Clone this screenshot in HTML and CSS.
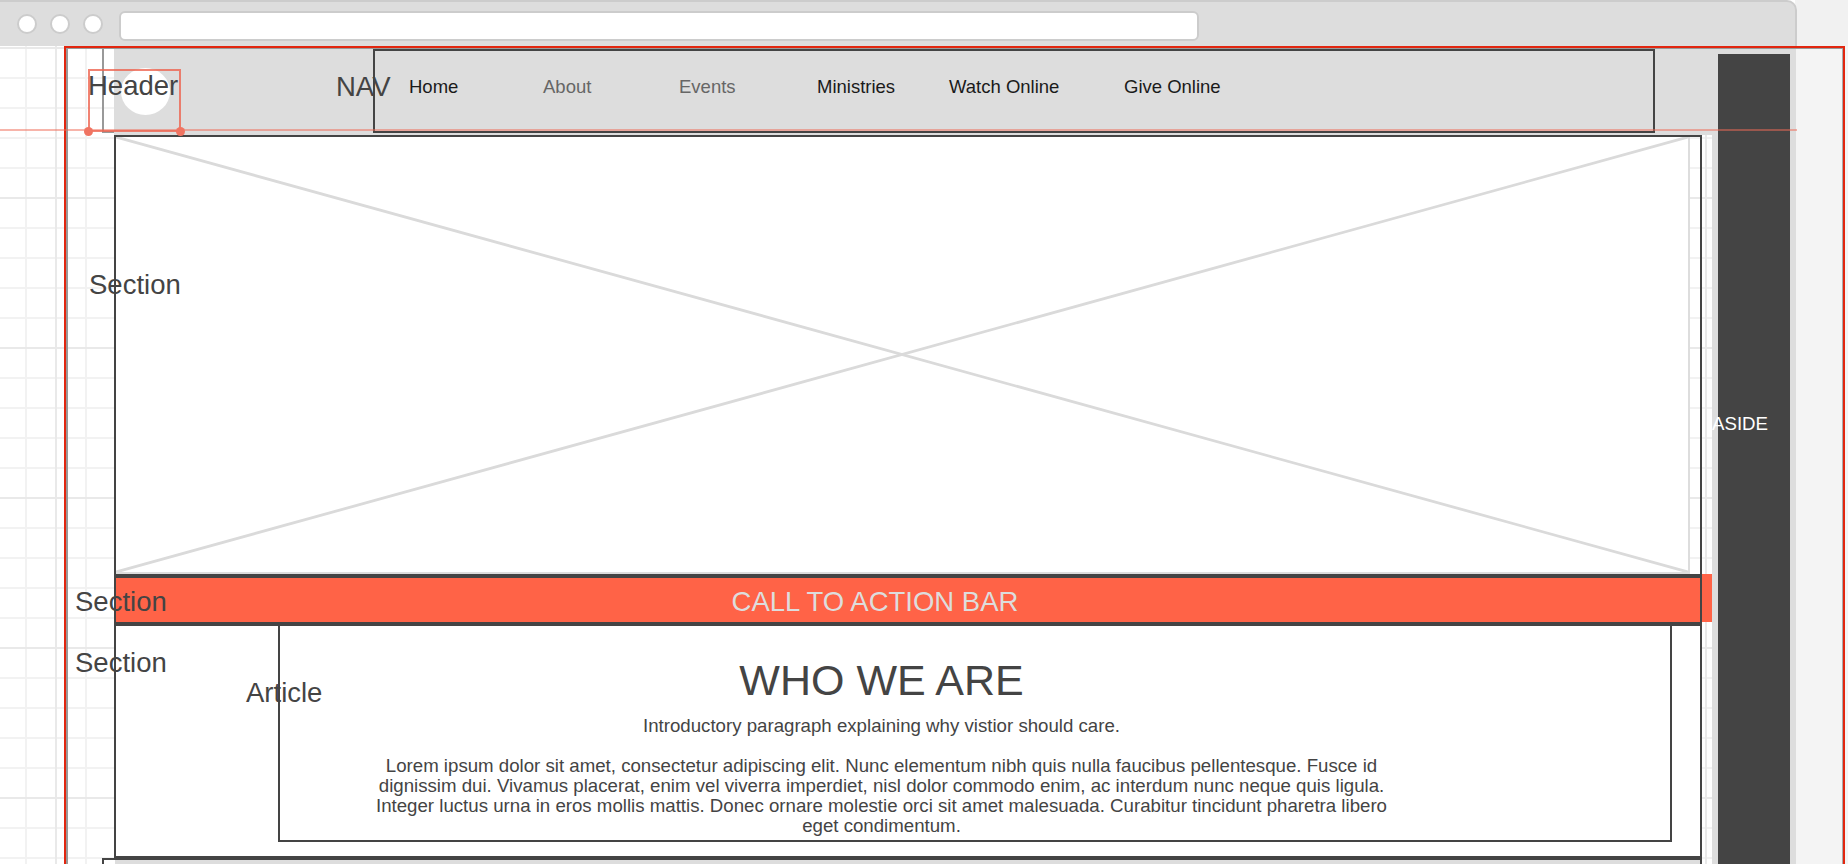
FILE: index.html
```html
<!DOCTYPE html>
<html lang="en">
<head>
<meta charset="utf-8">
<title>Wireframe</title>
<link rel="stylesheet" href="styles.css">
</head>
<body>
<div class="topbar">
  <div class="chrome">
    <span class="dot"></span><span class="dot"></span><span class="dot"></span>
    <div class="url"></div>
  </div>
  <div class="topbar-rest"></div>
</div>
<div class="canvas">
  <div class="gutter"></div>
  <div class="frame">
    <div class="frame-inner">
      <div class="main">
        <header class="site-header">
          <div class="hdr-edge"></div>
          <div class="hdr-main">
            <div class="logo"></div>
            <nav class="nav">
              <a class="nav-link dark">Home</a>
              <a class="nav-link muted">About</a>
              <a class="nav-link muted">Events</a>
              <a class="nav-link dark">Ministries</a>
              <a class="nav-link dark">Watch Online</a>
              <a class="nav-link dark">Give Online</a>
            </nav>
          </div>
        </header>
        <section class="hero">
          <div class="placeholder">
            <svg class="xmark" viewBox="0 0 100 100" preserveAspectRatio="none">
              <line x1="0" y1="0" x2="100" y2="100" vector-effect="non-scaling-stroke"/>
              <line x1="100" y1="0" x2="0" y2="100" vector-effect="non-scaling-stroke"/>
            </svg>
          </div>
        </section>
        <div class="cta-row">
          <section class="cta">CALL TO ACTION BAR</section>
          <div class="cta-tail"></div>
        </div>
        <section class="who">
          <article class="article">
            <div class="article-body">
              <h1 class="who-title">WHO WE ARE</h1>
              <p class="intro">Introductory paragraph explaining why vistior should care.</p>
              <p class="lorem">Lorem ipsum dolor sit amet, consectetur adipiscing elit. Nunc elementum nibh quis nulla faucibus pellentesque. Fusce id dignissim dui. Vivamus placerat, enim vel viverra imperdiet, nisl dolor commodo enim, ac interdum nunc neque quis ligula. Integer luctus urna in eros mollis mattis. Donec ornare molestie orci sit amet malesuada. Curabitur tincidunt pharetra libero eget condimentum.</p>
            </div>
          </article>
        </section>
        <footer class="footer"><div class="footer-fill"></div></footer>
      </div>
      <aside class="aside"><div class="aside-inner"></div></aside>
      <div class="side-fill"></div>
    </div>
  </div>
  <div class="canvas-rest"></div>
</div>

<div class="guide"></div>
<div class="select-box"><span class="handle h-left"></span><span class="handle h-right"></span></div>
<span class="label l-header">Header</span>
<span class="label l-nav">NAV</span>
<span class="label l-sec1">Section</span>
<span class="label l-sec2">Section</span>
<span class="label l-sec3">Section</span>
<span class="label l-article">Article</span>
<span class="aside-label">ASIDE</span>
</body>
</html>
```
FILE: styles.css
```css
* { box-sizing: border-box; }

html, body {
  margin: 0;
  padding: 0;
}

body {
  position: relative;
  width: 1848px;
  height: 864px;
  overflow: hidden;
  font-family: "Liberation Sans", Arial, sans-serif;
  color: #444;
  background-color: #fff;
  background-image:
    linear-gradient(to right, #e9e9e9 2px, transparent 2px),
    linear-gradient(to bottom, #e9e9e9 2px, transparent 2px),
    linear-gradient(to right, #f2f2f2 2px, transparent 2px),
    linear-gradient(to bottom, #f2f2f2 2px, transparent 2px);
  background-size: 150px 150px, 150px 150px, 30px 30px, 30px 30px;
  background-position: 55px 0, 0 47px, 25px 0, 0 17px;
}

/* browser chrome */
.topbar {
  display: flex;
  height: 46px;
}
.chrome {
  width: 1797px;
  height: 46px;
  background: #ddd;
  border-top: 2px solid #ccc;
  border-right: 2px solid #ccc;
  border-top-right-radius: 10px;
  display: flex;
  align-items: center;
  padding-left: 17px;
  gap: 13px;
}
.dot {
  width: 20px;
  height: 20px;
  border-radius: 50%;
  background: #fff;
  border: 2px solid #ccc;
  flex: none;
}
.url {
  margin-left: 3px;
  margin-top: 4px;
  width: 1080px;
  height: 30px;
  background: #fff;
  border: 2px solid #ccc;
  border-radius: 6px;
}
.topbar-rest {
  flex: 1;
  background: #f1f1f1;
}

/* canvas */
.canvas {
  display: flex;
  height: 818px;
}
.gutter { width: 64px; flex: none; }
.frame {
  width: 1781px;
  flex: none;
  border: 2px solid #e2260f;
  border-bottom: 0;
}
.frame-inner {
  height: 100%;
  display: flex;
  border-left: 2px solid #999;
  border-top: 1px solid #999;
  border-right: 1px solid #aaa;
}
.canvas-rest { flex: 1; background: #f4f4f4; }

.main {
  width: 1644px;
  flex: none;
  display: flex;
  flex-direction: column;
}

/* header */
.site-header {
  display: flex;
  height: 86px;
  margin-left: 34px;
  flex: none;
}
.hdr-edge {
  width: 12px;
  height: 84px;
  border-left: 2px solid #999;
  border-bottom: 2px solid #999;
}
.hdr-main {
  flex: 1;
  background: #ddd;
  display: flex;
  align-items: flex-start;
}
.logo {
  width: 49px;
  height: 47px;
  margin-left: 7px;
  margin-top: 19px;
  border-radius: 50%;
  background: #fff;
}
.nav {
  margin-left: 203px;
  width: 1282px;
  height: 84px;
  border: 2px solid #444;
  padding: 25px 0 0 34px;
  display: grid;
  grid-template-columns: 134px 136px 138px 132px 175px auto;
  align-content: start;
}
.nav-link {
  font-size: 18.5px;
  line-height: 21px;
  white-space: nowrap;
}
.nav-link.dark { color: #1a1a1a; }
.nav-link.muted { color: #666; }

/* hero */
.hero {
  margin-left: 46px;
  width: 1588px;
  flex: none;
  border: 2px solid #444;
  border-bottom: 0;
}
.placeholder {
  width: 1574px;
  height: 437px;
  background: #fff;
  border-right: 2px solid #ddd;
  border-bottom: 2px solid #ddd;
}
.xmark {
  display: block;
  width: 100%;
  height: 100%;
}
.xmark line {
  stroke: #dadada;
  stroke-width: 2.8;
}

/* call to action */
.cta-row {
  display: flex;
  align-items: flex-start;
  margin-left: 46px;
  flex: none;
}
.cta {
  width: 1588px;
  height: 52px;
  background: #ff6347;
  border: 4px solid #444;
  border-left-width: 2px;
  border-right-width: 2px;
  padding: 4px 66px 0 0;
  color: #ddd;
  font-size: 27.5px;
  line-height: 40px;
  text-align: center;
}
.cta-tail {
  width: 10px;
  height: 48px;
  background: #ff6347;
}

/* who we are */
.who {
  margin-left: 46px;
  width: 1588px;
  height: 234px;
  flex: none;
  background: #fff;
  border: 2px solid #444;
  border-top: 0;
  border-bottom-width: 4px;
  padding: 0 28px 14px 162px;
}
.article {
  height: 100%;
  border: 2px solid #444;
  border-top: 0;
  background: #fff;
}
.article-body {
  width: 1203px;
  text-align: center;
  padding-top: 33px;
}
.who-title {
  margin: 0;
  font-weight: normal;
  font-size: 43px;
  line-height: 42px;
  color: #444;
}
.intro {
  margin: 15px 0 0;
  font-size: 18.67px;
  line-height: 20px;
}
.lorem {
  margin: 20px auto 0;
  max-width: 1022px;
  font-size: 18.67px;
  line-height: 20px;
}

/* footer */
.footer {
  margin-top: -2px;
  margin-left: 34px;
  width: 1600px;
  flex: none;
  border: 2px solid #444;
  border-bottom: 0;
  padding-left: 11px;
}
.footer-fill {
  height: 20px;
  background: #ddd;
}

/* aside */
.aside {
  width: 84px;
  flex: none;
  background: #ddd;
  padding: 5px 6px 0;
}
.aside-inner {
  height: 100%;
  background: #444;
}
.side-fill {
  flex: 1;
  background: #f4f4f4;
}

/* editor overlays */
.guide {
  position: absolute;
  left: 0;
  top: 129px;
  width: 1797px;
  height: 2px;
  background: rgba(240, 105, 85, 0.5);
}
.select-box {
  position: absolute;
  left: 88px;
  top: 69px;
  width: 93px;
  height: 63px;
  border: 2px solid rgba(238, 100, 80, 0.8);
}
.handle {
  position: absolute;
  bottom: -6px;
  width: 9px;
  height: 9px;
  border-radius: 50%;
  background: #f07462;
}
.h-left { left: -6px; }
.h-right { right: -6px; }

.label {
  position: absolute;
  font-size: 27.5px;
  line-height: 27px;
  color: #444;
  white-space: nowrap;
}
.l-header { left: 88px; top: 72px; }
.l-nav { left: 336px; top: 73px; }
.l-sec1 { left: 89px; top: 271px; }
.l-sec2 { left: 75px; top: 588px; }
.l-sec3 { left: 75px; top: 649px; }
.l-article { left: 246px; top: 679px; }
.aside-label {
  position: absolute;
  left: 1712px;
  top: 415px;
  font-size: 18.67px;
  line-height: 18px;
  color: #fff;
}
```
